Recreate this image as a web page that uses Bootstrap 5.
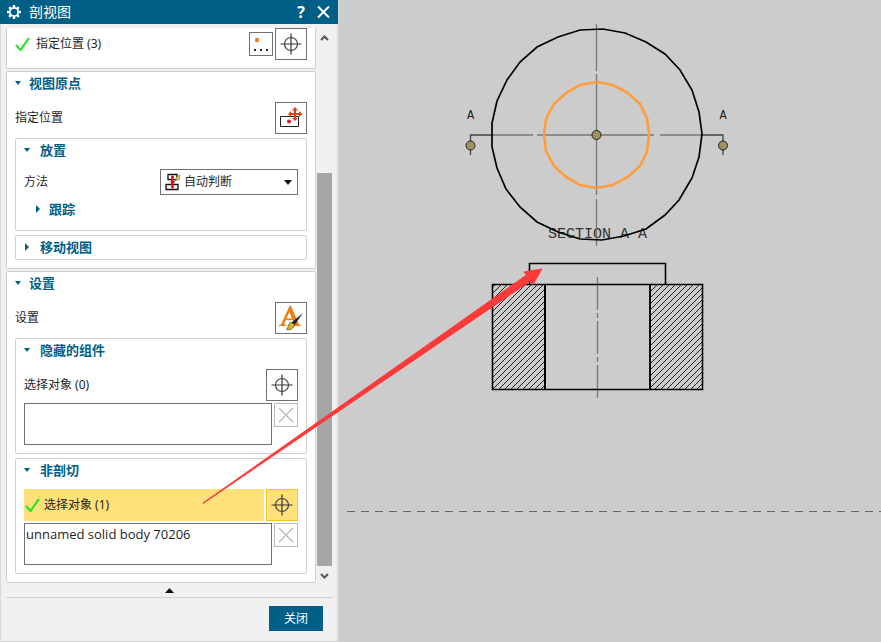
<!DOCTYPE html>
<html lang="zh-CN">
<head>
<meta charset="utf-8">
<meta name="viewport" content="width=device-width, initial-scale=1">
<title>剖视图</title>
<link href="https://cdn.jsdelivr.net/npm/bootstrap@5.3.0/dist/css/bootstrap.min.css" rel="stylesheet">
<style>
:root { --teal: #005f87; --line: #d0d0d0; --edge: #707073; }
body { font-family: "Noto Sans", "Noto Sans CJK SC", sans-serif; font-size: 12px; line-height: 16px; color: #1e1e1e; background: #ccc; }
button, select, textarea { font: inherit; color: inherit; border-radius: 0; }
svg { display: block; flex: none; }
.dialog { width: 339px; background: #f0f0f0; border: 1px solid #d8d8d8; border-top: 0; border-right-width: 2px; flex: none; }
.titlebar { background: var(--teal); color: #fff; height: 24px; margin: 0 -1px; padding: 0 8px 0 7px; }
.titlebar h1 { font-size: 14px; line-height: 22px; font-weight: 400; }
.titlebar button { background: none; border: 0; padding: 0; color: #fff; }
.scroller { padding: 4px 5px 0 5px; gap: 1px; }
.sections { gap: 2px; }
.panel { background: #fff; border: 1px solid var(--line); border-radius: 2px; padding: 0 8px 8px; }
.panel-first { border-top: 0; border-radius: 0; }
.panel-closed { padding-bottom: 1px; }
.head { background: none; border: 0; padding: 0; color: var(--teal); font-weight: 700; font-size: 13px; line-height: 16px; height: 22px; display: flex; align-items: center; gap: 8px; text-align: left; }
.head svg { width: 6px; fill: var(--teal); }
.panel .panel .head { gap: 10px; }
.panel .panel .head-sub { gap: 8px; margin: 3px 0 2px 11px; }
.gap-tight { gap: 2px; }
.below { margin-top: 2px; }
.tool { width: 32px; height: 32px; padding: 0; border: 1px solid var(--edge); background: #fff; display: grid; place-items: center; flex: none; }
.tool-sm { width: 24px; height: 24px; }
.tool-off { border-color: #b9b9b9; }
.line-row { min-height: 26px; }
.picker { width: 138px; height: 26px; border: 1px solid var(--edge); background: #fff; padding: 0 4px; gap: 2px; }
.picker select { border: 0; background: none; appearance: none; padding: 0; outline-offset: 2px; line-height: 20px; }
.list-box { height: 42px; border: 1px solid var(--edge); padding: 2px 1px; resize: none; font-family: "Open Sans", "Noto Sans CJK SC", sans-serif; font-size: 13px; line-height: 16px; overflow: hidden; background: #fff; }
.picked { background: #ffe079; padding-left: 1px; }
.tool-picked { background: #ffe079; border-color: #fcc027; }
.track { width: 15px; padding: 7px 0 5px; gap: 7px; }
.thumb { background: #a6a6a6; width: 15px; height: 393px; }
.foot { margin: 0 4px 0 5px; border-top: 1px solid var(--line); padding: 8px 10px 10px 0; }
.close-btn { background: var(--teal); color: #fff; border: 0; width: 54px; height: 25px; padding: 0; font-size: 12px; line-height: 16px; }
.drawing { font-family: "Liberation Mono", monospace; font-size: 15px; }
.pointer { inset: 0; pointer-events: none; }
</style>
<script src="https://cdn.jsdelivr.net/npm/bootstrap@5.3.0/dist/js/bootstrap.bundle.min.js"></script>
</head>
<body>
<svg width="0" height="0" class="position-absolute" aria-hidden="true">
  <symbol id="target" viewBox="0 0 22 22"><path d="M11 0.500v21M0.500 11h21" stroke="#333" stroke-width="1.200"/><circle cx="11" cy="11" r="6.500" fill="none" stroke="#444" stroke-width="1.200"/></symbol>
  <symbol id="tick" viewBox="0 0 15 14"><path d="M1 8l4.500 5L14 1" fill="none" stroke="#2fe336" stroke-width="2.200"/></symbol>
  <symbol id="cross" viewBox="0 0 16 16"><path d="M1 1l14 14M15 1L1 15" stroke="#b5b5b5" stroke-width="1.200"/></symbol>
  <symbol id="down" viewBox="0 0 6 6"><path d="M0 1h6L3 5z"/></symbol>
  <symbol id="right" viewBox="0 0 6 8"><path d="M1 0v8l4-4z"/></symbol>
</svg>
<div class="position-relative d-flex min-vh-100">
  <section class="dialog d-flex flex-column" aria-label="剖视图">
    <header class="titlebar d-flex align-items-center">
      <svg width="14" height="14" viewBox="0 0 14 14" aria-hidden="true"><circle cx="7" cy="7" r="4.200" fill="none" stroke="#fff" stroke-width="1.700"/><path d="M7 0v2.500M7 11.500V14M0 7h2.500M11.500 7H14M2.200 2.200l1.600 1.600M10.200 10.200l1.600 1.600M11.800 2.200l-1.600 1.600M3.800 10.200l-1.600 1.600" stroke="#fff" stroke-width="2.400"/></svg>
      <h1 class="mb-0 ms-2 flex-grow-1">剖视图</h1>
      <button type="button" class="fs-6 fw-bold me-2 pe-1" aria-label="帮助">?</button>
      <button type="button" aria-label="关闭窗口"><svg width="13" height="12" viewBox="0 0 13 12"><path d="M1 .5l11 11M12 .5L1 11.500" stroke="#fff" stroke-width="2"/></svg></button>
    </header>
    <div class="scroller d-flex flex-grow-1">
      <div class="sections d-flex flex-column flex-grow-1">
        <div class="panel panel-first">
          <div class="line-row d-flex align-items-center gap-tight">
            <svg width="15" height="14" aria-hidden="true"><use href="#tick"/></svg>
            <span class="ps-1 flex-grow-1">指定位置 (3)</span>
            <button type="button" class="tool tool-sm" aria-label="点对话框"><svg width="18" height="18" viewBox="0 0 18 18"><circle cx="5" cy="5" r="2.200" fill="#e87c1e"/><path d="M2 14h2v2H2zM8 14h2v2H8zM14 14h2v2h-2z" fill="#222"/></svg></button>
            <button type="button" class="tool" aria-label="指定位置"><svg width="22" height="22"><use href="#target"/></svg></button>
          </div>
        </div>
        <div class="panel">
          <button type="button" class="head"><svg height="6"><use href="#down"/></svg>视图原点</button>
          <div class="line-row d-flex align-items-center mt-2 mb-1">
            <span class="flex-grow-1">指定位置</span>
            <button type="button" class="tool" aria-label="指定视图原点"><svg width="24" height="22" viewBox="0 0 24 22"><path d="M1.500 9.500h18v10h-18z" fill="none" stroke="#222"/><path d="M16 0l3 3.500h-2V6h3V4l3.500 3L20 10V8h-3v3h2l-3 3-3-3h2V8h-3v2L9 7l3-3v2h3V3.500h-2z" fill="#db4317"/><circle cx="10" cy="14.500" r="2" fill="#e0161b"/></svg></button>
          </div>
          <div class="panel mb-1">
            <button type="button" class="head"><svg height="6"><use href="#down"/></svg>放置</button>
            <div class="line-row d-flex align-items-center mt-2">
              <label class="flex-grow-1" for="method">方法</label>
              <div class="picker d-flex align-items-center">
                <svg width="17" height="18" viewBox="0 0 17 18" aria-hidden="true"><path d="M3 1.500h9v5H3zM1 11.500h12v5H1z" fill="#fff" stroke="#111" stroke-width="1.300"/><path d="M7.500 3v11" stroke="#d41111" stroke-width="1.500"/><path d="M7.500 6l2.200 3H5.300zM7.500 12l2.200-3H5.300z" fill="#d41111"/><circle cx="7.500" cy="4" r="1.500" fill="#d41111"/><circle cx="7.500" cy="14" r="1.500" fill="#d41111"/><path d="M9 9l3-5 3-2-1 3 1 1-4 1z" fill="#f7e27a" stroke="#6b5b20" stroke-width=".6"/></svg>
                <select id="method" class="flex-grow-1"><option>自动判断</option></select>
                <svg width="9" height="5" viewBox="0 0 9 5" aria-hidden="true"><path d="M0 0h8L4 5z" fill="#111"/></svg>
              </div>
            </div>
            <button type="button" class="head head-sub"><svg height="8"><use href="#right"/></svg>跟踪</button>
          </div>
          <div class="panel panel-closed">
            <button type="button" class="head"><svg height="8"><use href="#right"/></svg>移动视图</button>
          </div>
        </div>
        <div class="panel">
          <button type="button" class="head"><svg height="6"><use href="#down"/></svg>设置</button>
          <div class="line-row d-flex align-items-center mt-2 mb-1">
            <span class="flex-grow-1">设置</span>
            <button type="button" class="tool" aria-label="编辑设置"><svg width="25" height="25" viewBox="0 0 25 25"><path d="M0 20v-1l2-.5L10.500 0h1.500L20 18.500l2 .5v1h-9v-1l2.500-.5-2-4.500H7l-2 4.500L7.500 19v1zM7.500 12.500h5.500L10.300 6z" fill="#f07d12"/><path d="M24 7l-8.500 12-3-2.500z" fill="#222"/><path d="M12 16l3.500 3c-2 5-5 5-8 4.500 2-2 1.500-5.500 4.500-7.500z" fill="#d9b82e" stroke="#5c4c14" stroke-width=".8"/></svg></button>
          </div>
          <div class="panel mb-1">
            <button type="button" class="head"><svg height="6"><use href="#down"/></svg>隐藏的组件</button>
            <div class="line-row d-flex align-items-center mt-2">
              <label class="flex-grow-1" for="hidden-parts">选择对象 (0)</label>
              <button type="button" class="tool" aria-label="选择隐藏的组件"><svg width="22" height="22"><use href="#target"/></svg></button>
            </div>
            <div class="d-flex align-items-start gap-tight below">
              <textarea id="hidden-parts" class="list-box flex-grow-1" readonly></textarea>
              <button type="button" class="tool tool-sm tool-off" aria-label="移除"><svg width="16" height="16"><use href="#cross"/></svg></button>
            </div>
          </div>
          <div class="panel">
            <button type="button" class="head"><svg height="6"><use href="#down"/></svg>非剖切</button>
            <div class="line-row d-flex gap-tight mt-2">
              <label class="picked d-flex align-items-center flex-grow-1" for="non-section"><svg width="15" height="14" aria-hidden="true"><use href="#tick"/></svg><span class="ms-1">选择对象 (1)</span></label>
              <button type="button" class="tool tool-picked" aria-label="选择非剖切对象"><svg width="22" height="22"><use href="#target"/></svg></button>
            </div>
            <div class="d-flex align-items-start gap-tight below">
              <textarea id="non-section" class="list-box flex-grow-1" readonly>unnamed solid body 70206</textarea>
              <button type="button" class="tool tool-sm tool-off" aria-label="移除"><svg width="16" height="16"><use href="#cross"/></svg></button>
            </div>
          </div>
        </div>
      </div>
      <div class="track d-flex flex-column align-items-center" aria-hidden="true">
        <svg width="9" height="6" viewBox="0 0 9 6"><path d="M1 5l3.500-3.500L8 5" fill="none" stroke="#555" stroke-width="2"/></svg>
        <div class="thumb mt-auto"></div>
        <svg width="9" height="6" viewBox="0 0 9 6"><path d="M1 1l3.500 3.500L8 1" fill="none" stroke="#555" stroke-width="2"/></svg>
      </div>
    </div>
    <svg class="mx-auto my-1" width="9" height="5" viewBox="0 0 9 5" aria-hidden="true"><path d="M0 5h9L4.500 0z" fill="#111"/></svg>
    <footer class="foot d-flex justify-content-end"><button type="button" class="close-btn">关闭</button></footer>
  </section>
  <main class="flex-grow-1 d-flex">
    <svg class="drawing w-100 flex-shrink-1" role="img" aria-label="剖视图图纸">
      <defs><pattern id="hatch" width="6" height="6" patternUnits="userSpaceOnUse"><path d="M-1 7L7-1M-1 1L1-1M5 7l2-2" stroke="#222" stroke-width="1"/></pattern></defs>
      <g transform="translate(-339 0)">
        <text x="548" y="238" fill="#333">SECTION A A</text>
        <text x="470.500" y="119" text-anchor="middle" font-size="12" fill="#222">A</text>
        <text x="723" y="119" text-anchor="middle" font-size="12" fill="#222">A</text>
        <g fill="none" stroke="#777" stroke-width="1.300">
          <path d="M596.500 24v47M596.500 74v121M596.500 199v47M492 135h41M537 135h117M660 135h42M597.500 277v33M597.500 313v5M597.500 321v33M597.500 357v5M597.500 365v33"/>
          <path d="M470.500 155v-20H492M702 135h21v20" stroke="#444"/>
        </g>
        <path d="M492 123L497 101 507 80 520 62 537 47 558 37 580 30 603 29 625 33 646 42 665 54 680 70 692 90 699 112 702 134 699 157 692 178 679 200 665 215 646 229 624 236 602 240 580 239 558 232 537 222 520 207 506 189 497 168 492 147z" fill="none" stroke="#000" stroke-width="1.700"/>
        <path d="M544 134L546 119 554 104 566 93 580 85 597 82 613 85 628 93 640 104 647 118 649 134 647 152 640 166 628 177 613 185 597 188 580 185 566 177 554 166 546 151z" fill="none" stroke="#ff9c3c" stroke-width="2.600"/>
        <g fill="#a19360" stroke="#222"><circle cx="596.500" cy="135" r="4.500"/><circle cx="470.500" cy="145.500" r="4.500"/><circle cx="723" cy="145.500" r="4.500"/></g>
        <path d="M492 284h53v106h-53zM650 284h53v106h-53z" fill="url(#hatch)"/>
        <path d="M492.500 284.500h210v105h-210zM529.500 284v-20.500h136V284" fill="none" stroke="#000" stroke-width="1.600"/>
        <path d="M545 284v106M650 284v106" stroke="#000" stroke-width="2"/>
      </g>
      <line x1="8" x2="100%" y1="511.500" y2="511.500" stroke="#666" stroke-dasharray="8 6"/>
    </svg>
  </main>
  <svg class="pointer position-absolute w-100 h-100" aria-hidden="true"><path d="M203 503L526.500 275 524 272 542 269 533 284.500 530.500 281 203 503.500z" fill="#fd3a3a" stroke="#fd3a3a"/></svg>
</div>
</body>
</html>
